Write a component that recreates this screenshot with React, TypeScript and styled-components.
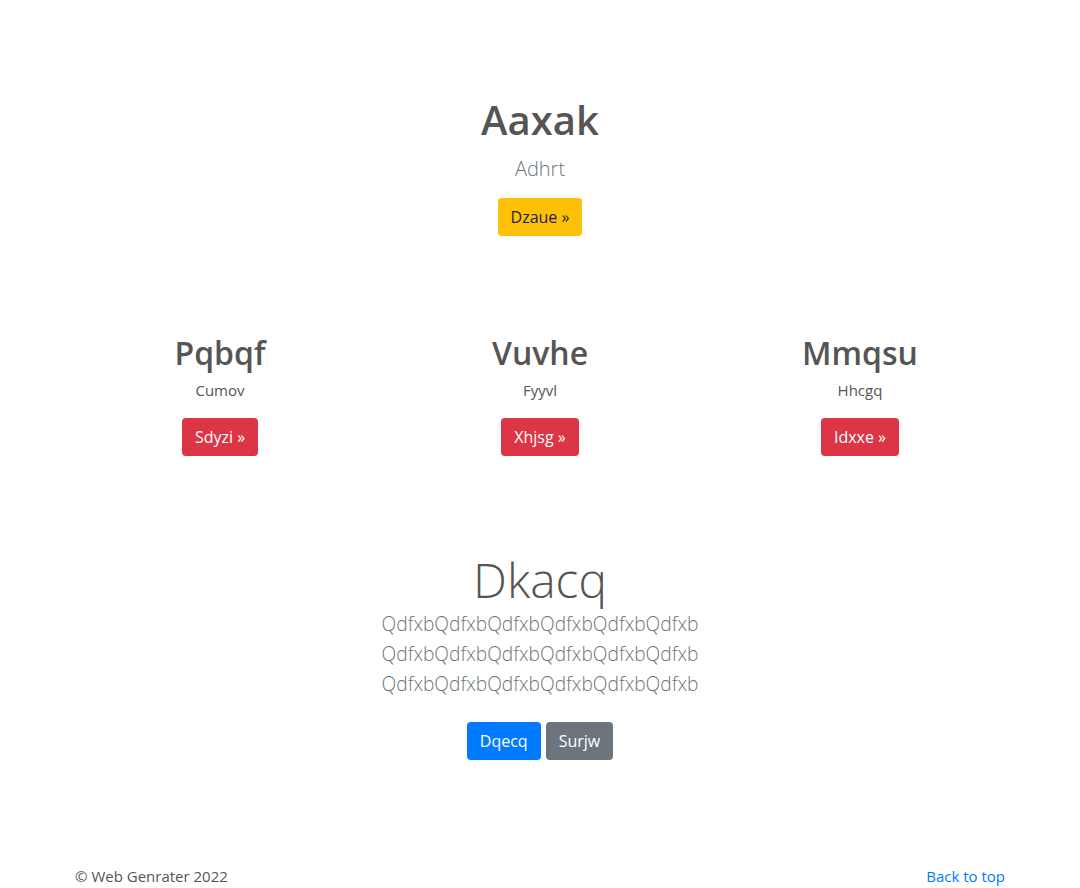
import React from 'react';
import styled, { createGlobalStyle } from 'styled-components';

const GlobalStyle = createGlobalStyle`
  * { box-sizing: border-box; }
  body {
    margin: 0;
    font-family: "Open Sans", "Noto Sans", "Liberation Sans", sans-serif;
    font-size: 16px;
    line-height: 1.5;
    color: #555;
    background: #fff;
  }
`;

const Container = styled.div`
  width: 960px;
  margin: 0 auto;
  padding: 0 15px;
`;

const Hero = styled.section`
  padding-top: 96px;
  text-align: center;
`;

const Title = styled.h1`
  margin: 0 0 10px;
  font-size: 40px;
  font-weight: 600;
  line-height: 1.2;
  color: #555;
`;

const Lead = styled.p`
  margin: 0 0 14px;
  font-size: 20px;
  font-weight: 300;
  line-height: 1.5;
  color: #6c757d;
`;

const Button = styled.a<{ $variant: 'warning' | 'danger' | 'primary' | 'secondary' }>`
  display: inline-block;
  padding: 6px 12px;
  border: 1px solid transparent;
  font-size: 16px;
  line-height: 1.5;
  border-radius: 4px;
  text-decoration: none;
  cursor: pointer;
  background: ${p =>
    p.$variant === 'warning' ? '#ffc107' :
    p.$variant === 'danger' ? '#dc3545' :
    p.$variant === 'primary' ? '#007bff' : '#6c757d'};
  color: ${p => (p.$variant === 'warning' ? '#212529' : '#fff')};
`;

const Row = styled.div`
  display: grid;
  grid-template-columns: repeat(3, 1fr);
  margin: 98px -15px 0;
`;

const Col = styled.div`
  padding: 0 15px;
  text-align: center;
`;

const ColTitle = styled.h2`
  margin: 0 0 7px;
  font-size: 32px;
  font-weight: 600;
  line-height: 1.2;
  color: #555;
`;

const ColText = styled.p`
  margin: 0 0 16px;
  font-size: 15px;
  color: #555;
`;

const Feature = styled.section`
  margin-top: 95px;
  text-align: center;
`;

const Display = styled.h1`
  margin: 0 0 1px;
  font-size: 48px;
  font-weight: 300;
  line-height: 1.2;
  color: #555;
`;

const FeatureLead = styled(Lead)`
  margin: 0 0 23px;
  font-size: 19.2px;
  line-height: 30px;
  span { display: block; }
`;

const ButtonGroup = styled.div`
  display: flex;
  justify-content: center;
  gap: 5px;
`;

const Footer = styled.footer`
  display: flex;
  justify-content: space-between;
  margin-top: 105px;
  font-size: 15px;
`;

const TopLink = styled.a`
  color: #007bff;
  text-decoration: none;
`;

const columns = [
  { title: 'Pqbqf', text: 'Cumov', button: 'Sdyzi' },
  { title: 'Vuvhe', text: 'Fyyvl', button: 'Xhjsg' },
  { title: 'Mmqsu', text: 'Hhcgq', button: 'Idxxe' },
];

const leadLine = 'QdfxbQdfxbQdfxbQdfxbQdfxbQdfxb';

export default function App() {
  return (
    <>
      <GlobalStyle />
      <Container>
        <Hero>
          <Title>Aaxak</Title>
          <Lead>Adhrt</Lead>
          <Button $variant="warning">Dzaue &raquo;</Button>
        </Hero>
        <Row>
          {columns.map(c => (
            <Col key={c.title}>
              <ColTitle>{c.title}</ColTitle>
              <ColText>{c.text}</ColText>
              <Button $variant="danger">{c.button} &raquo;</Button>
            </Col>
          ))}
        </Row>
        <Feature>
          <Display>Dkacq</Display>
          <FeatureLead>
            <span>{leadLine}</span>
            <span>{leadLine}</span>
            <span>{leadLine}</span>
          </FeatureLead>
          <ButtonGroup>
            <Button $variant="primary">Dqecq</Button>
            <Button $variant="secondary">Surjw</Button>
          </ButtonGroup>
        </Feature>
        <Footer>
          <span>&copy; Web Genrater 2022</span>
          <TopLink href="#">Back to top</TopLink>
        </Footer>
      </Container>
    </>
  );
}
